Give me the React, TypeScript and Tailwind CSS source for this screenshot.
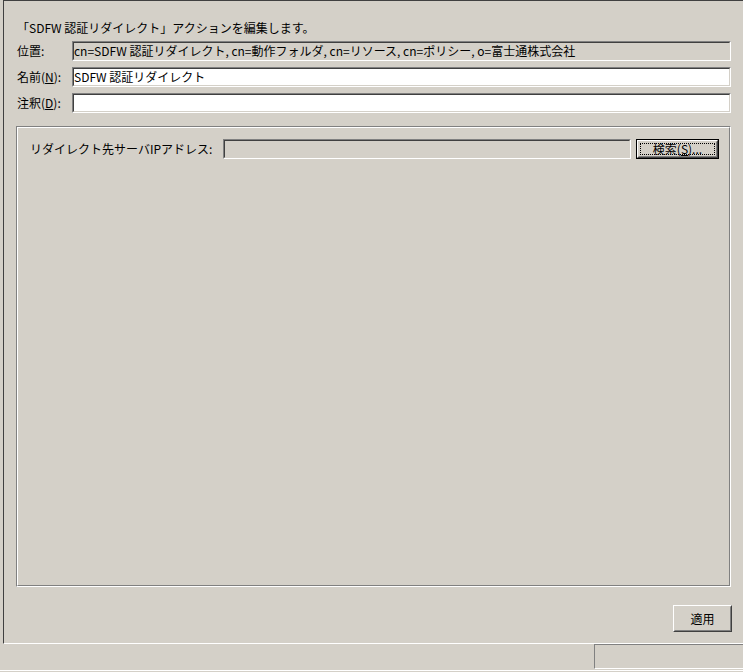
import React from 'react';

const font = { fontFamily: '"Noto Sans CJK JP", "MS UI Gothic", sans-serif' };

function Sunken({ children, disabled }: { children?: React.ReactNode; disabled?: boolean }) {
  return (
    <div className="flex-1 h-full border border-t-[#808080] border-l-[#808080] border-b-white border-r-white">
      <div
        className={`h-full border border-t-[#404040] border-l-[#404040] border-b-[#d4d0c8] border-r-[#d4d0c8] flex items-center overflow-hidden whitespace-nowrap text-[12px] leading-none text-black ${
          disabled ? 'bg-[#d4d0c8]' : 'bg-white'
        }`}
      >
        {children}
      </div>
    </div>
  );
}

function FieldRow({ label, children, disabled }: { label: React.ReactNode; children?: React.ReactNode; disabled?: boolean }) {
  return (
    <div className="flex items-center h-[20px]">
      <div className="w-[55px] text-[12px] leading-none whitespace-nowrap">{label}</div>
      <Sunken disabled={disabled}>{children}</Sunken>
    </div>
  );
}

export default function App() {
  return (
    <div className="w-[743px] h-[672px] bg-[#d4d0c8] flex flex-col overflow-hidden text-black" style={font}>
      {/* editor area */}
      <div className="ml-[3px] h-[644px] border-l border-t border-l-[#404040] border-t-[#404040] border-b border-b-white flex flex-col pl-[13px] pr-[12px]">
        <div className="mt-[19px] h-[16px] text-[12px] leading-[16px] whitespace-nowrap">
          「SDFW 認証リダイレクト」アクションを編集します。
        </div>

        <div className="mt-[5px] flex flex-col gap-[6px]">
          <FieldRow label="位置:" disabled>
            cn=SDFW 認証リダイレクト, cn=動作フォルダ, cn=リソース, cn=ポリシー, o=富士通株式会社
          </FieldRow>
          <FieldRow
            label={
              <>
                名前(<span className="underline">N</span>):
              </>
            }
          >
            SDFW 認証リダイレクト
          </FieldRow>
          <FieldRow
            label={
              <>
                注釈(<span className="underline">D</span>):
              </>
            }
          />
        </div>

        {/* group box */}
        <div className="mt-[13px] ml-[-1px] h-[461px] border border-t-[#808080] border-l-[#808080] border-b-white border-r-white">
          <div className="h-full border border-t-white border-l-white border-b-[#808080] border-r-[#808080] pt-[11px] pl-[12px] pr-[10px]">
            <div className="flex items-center h-[20px]">
              <div className="w-[193px] text-[12px] leading-none whitespace-nowrap">リダイレクト先サーバIPアドレス:</div>
              <Sunken disabled />
              <div className="ml-[5px] w-[83px] h-[20px] border border-black">
                <div className="h-full border border-t-white border-l-white border-b-[#404040] border-r-[#404040]">
                  <div className="h-full border border-t-[#d4d0c8] border-l-[#d4d0c8] border-b-[#808080] border-r-[#808080] p-[1px]">
                    <div className="h-full border border-dotted border-black flex items-center justify-center text-[12px] leading-none whitespace-nowrap">
                      検索(<span className="underline">S</span>)...
                    </div>
                  </div>
                </div>
              </div>
            </div>
          </div>
        </div>

        <div className="mt-[18px] flex justify-end mr-[-1px]">
          <div className="w-[59px] h-[27px] border border-t-white border-l-white border-b-[#404040] border-r-[#404040]">
            <div className="h-full border border-t-[#d4d0c8] border-l-[#d4d0c8] border-b-[#808080] border-r-[#808080] flex items-center justify-center text-[12px] leading-none">
              適用
            </div>
          </div>
        </div>
      </div>

      {/* status bar */}
      <div className="h-[28px] flex flex-col">
        <div className="h-[25px] flex justify-end">
          <div className="w-[149px] h-full border-t border-l border-t-[#808080] border-l-[#808080] border-b border-b-white" />
        </div>
        <div className="mt-[1px] h-[1px] bg-white" />
      </div>
    </div>
  );
}
